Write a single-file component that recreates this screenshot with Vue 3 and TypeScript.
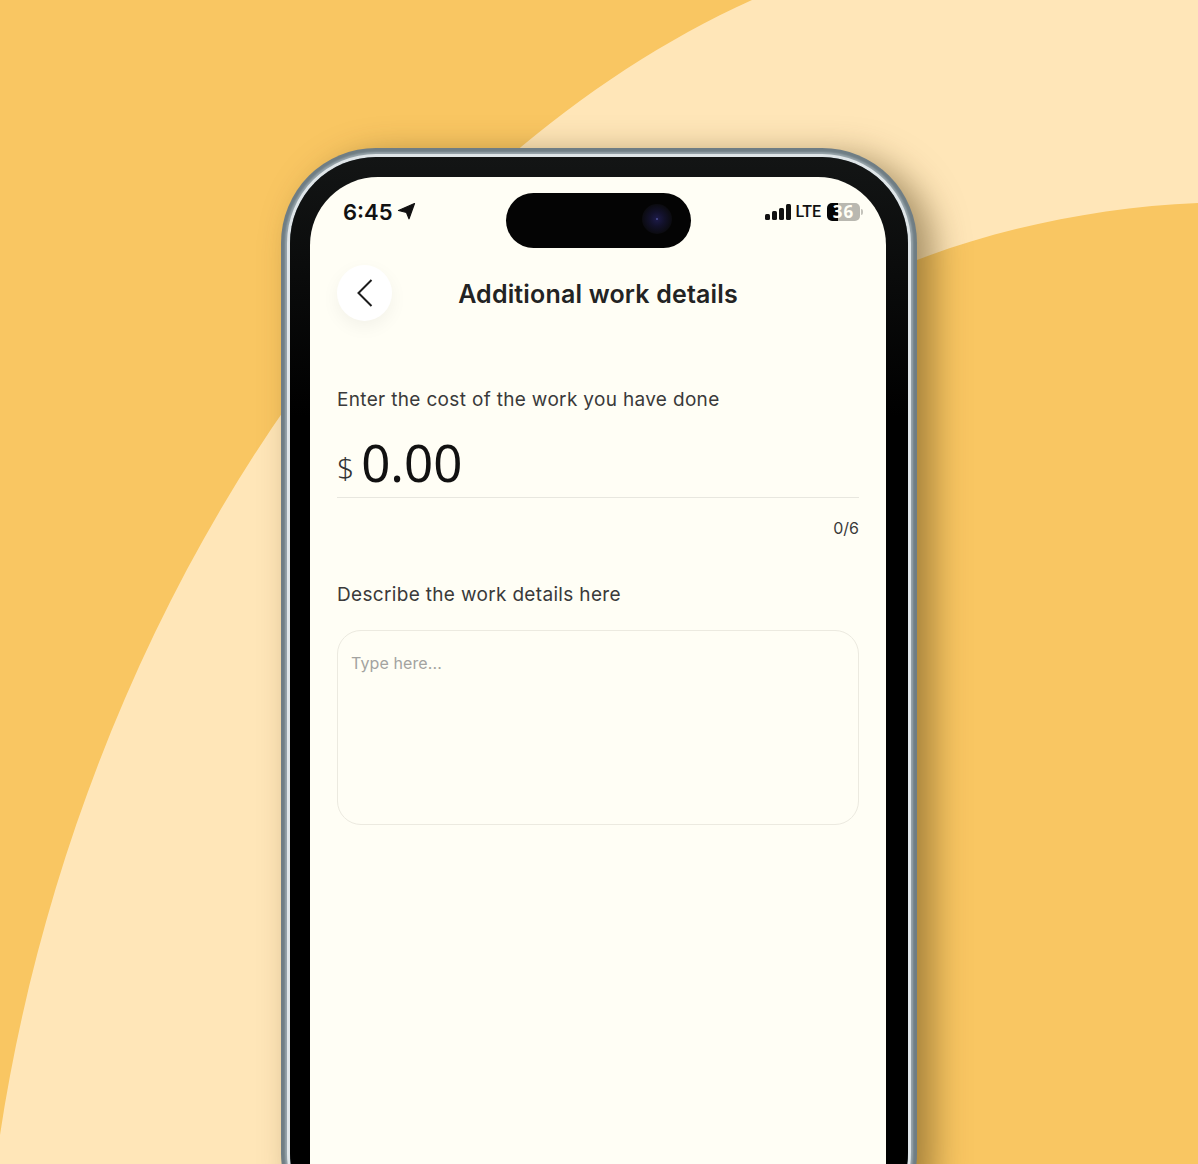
<script setup lang="ts">
const title = 'Additional work details'
</script>

<template>
  <div class="page">
    <svg class="bg" viewBox="0 0 1198 1164" width="1198" height="1164" aria-hidden="true">
      <rect width="1198" height="1164" fill="#f9c662" />
      <path d="M752 0 C 365 175 75 640 0 1135 L0 1164 L300 1164 L917 260 C 1000 228 1100 207 1198 203 L1198 0 Z" fill="#ffe6b8" />
    </svg>
    <div class="phone">
      <div class="bezel">
        <div class="screen">
          <div class="status">
            <div class="time">
              <span>6:45</span>
              <svg width="19" height="18" viewBox="0 0 19 18"><path d="M17.5 1.5 L1.5 8.5 L9.5 10.5 L12 16.8 Z" fill="#111" stroke="#111" stroke-width="1.2" stroke-linejoin="round" /></svg>
            </div>
            <div class="island"><span class="camera"><i></i></span></div>
            <div class="signal">
              <span class="bars"><i class="b1"></i><i class="b2"></i><i class="b3"></i><i class="b4"></i></span>
              <span class="lte">LTE</span>
              <span class="battery"><b>36</b></span>
              <span class="nub"></span>
            </div>
          </div>
          <header class="head">
            <button class="back" type="button" aria-label="Back">
              <svg width="18" height="30" viewBox="0 0 18 30"><path d="M15.5 2 L2.5 15 L15.5 28" fill="none" stroke="#1c1c1c" stroke-width="2" /></svg>
            </button>
            <h1>{{ title }}</h1>
          </header>
          <main class="form">
            <p class="label">Enter the cost of the work you have done</p>
            <div class="amount"><span class="cur">$</span><span class="val">0.00</span></div>
            <div class="count">0/6</div>
            <p class="label second">Describe the work details here</p>
            <div class="area">Type here...</div>
          </main>
        </div>
      </div>
    </div>
  </div>
</template>

<style>
html, body { margin: 0; }
</style>

<style scoped>
.page {
  position: relative;
  width: 1198px;
  height: 1164px;
  overflow: hidden;
  font-family: Inter, "Noto Sans", sans-serif;
}
.bg { position: absolute; inset: 0; display: block; }
.phone {
  position: absolute;
  left: 281px;
  top: 148px;
  width: 636px;
  height: 1100px;
  box-sizing: border-box;
  padding: 9px;
  border-radius: 95px;
  background: #6f7d84;
  box-shadow: 16px 8px 34px rgba(80, 60, 20, 0.5);
}
.bezel {
  box-sizing: border-box;
  height: 100%;
  padding: 20px 22px 0 20px;
  border-radius: 86px;
  background: linear-gradient(180deg, #131515 0, #0a0b0b 120px, #000 260px);
  box-shadow: 0 0 0 3px #dfe5e8, 0 0 2px 5px #98a5ab;
}
.screen {
  height: 100%;
  background: #fffef5;
  border-radius: 68px;
  color: #262626;
}
.status {
  position: relative;
  height: 71px;
  display: flex;
  justify-content: space-between;
  padding: 16px 23px 0 33px;
  box-sizing: border-box;
}
.time {
  display: flex;
  align-items: flex-start;
  gap: 4px;
  padding-top: 1px;
  font: 600 22px/36px Inter, sans-serif;
  color: #111;
}
.time svg { margin-top: 8px; }
.island {
  position: absolute;
  left: 196px;
  top: 16px;
  width: 185px;
  height: 55px;
  border-radius: 28px;
  background: #040404;
}
.camera {
  position: absolute;
  right: 19px;
  top: 11px;
  width: 30px;
  height: 30px;
  border-radius: 50%;
  background: radial-gradient(circle, #1d1b4a 0, #12112a 35%, #0b0b10 70%, #050505 100%);
}
.camera i {
  position: absolute;
  left: 14px;
  top: 14px;
  width: 2px;
  height: 2px;
  border-radius: 50%;
  background: #4d5196;
}
.signal {
  display: flex;
  align-items: center;
  height: 36px;
  margin-top: 1px;
}
.bars { display: flex; align-items: flex-end; gap: 2px; height: 16px; }
.bars i { width: 5px; background: #111; border-radius: 1.5px; }
.b1 { height: 6px; }
.b2 { height: 9px; }
.b3 { height: 12px; }
.b4 { height: 16px; }
.lte { font: 500 16px/20px Roboto, sans-serif; margin-left: 5px; color: #111; }
.battery {
  margin-left: 6px;
  width: 33px;
  height: 18px;
  border-radius: 5px;
  background: linear-gradient(90deg, #050505 0 33%, #b9b8b0 33% 100%);
  display: flex;
  align-items: center;
  justify-content: center;
}
.battery b { font: 700 17px/18px "Noto Sans", sans-serif; letter-spacing: 1px; color: #fffef5; }
.nub { width: 2px; height: 6px; margin-left: 1px; background: #c4c3bb; border-radius: 0 2px 2px 0; }
.head {
  position: relative;
  display: flex;
  justify-content: center;
  align-items: center;
  height: 56px;
  margin-top: 17px;
}
.back {
  position: absolute;
  left: 27px;
  top: 0;
  width: 55px;
  height: 56px;
  padding: 0;
  border: 0;
  border-radius: 50%;
  background: #fff;
  box-shadow: 0 6px 18px rgba(0, 0, 0, 0.05);
  display: flex;
  align-items: center;
  justify-content: center;
}
h1 {
  margin: 2px 0 0;
  font-size: 25px;
  font-weight: 600;
  letter-spacing: 0.17px;
  line-height: 32px;
  color: #232323;
}
.form { padding: 0 27px; }
.label {
  margin: 0;
  font-size: 19px;
  letter-spacing: 0.33px;
  line-height: 28px;
  color: #3a3a3a;
  padding-top: 65px;
}
.label.second { padding-top: 0; margin-top: 41px; }
.amount {
  display: flex;
  align-items: baseline;
  gap: 7px;
  height: 68px;
  box-sizing: border-box;
  margin-top: 16px;
  padding-top: 2px;
  border-bottom: 1px solid #e8e7df;
  font-family: "Noto Sans", sans-serif;
  color: #111;
}
.cur { font-size: 30px; font-weight: 300; line-height: 60px; color: #333; transform: translateY(-3px); }
.val { font-size: 51px; line-height: 60px; }
.count {
  text-align: right;
  font-size: 16px;
  line-height: 24px;
  margin-top: 18px;
  color: #3a3a3a;
}
.area {
  margin-top: 21px;
  height: 195px;
  box-sizing: border-box;
  padding: 20px 13px;
  border: 1px solid #eceae0;
  border-radius: 24px;
  font-size: 16px;
  letter-spacing: 0.1px;
  line-height: 24px;
  color: #a3a3a0;
}
</style>
